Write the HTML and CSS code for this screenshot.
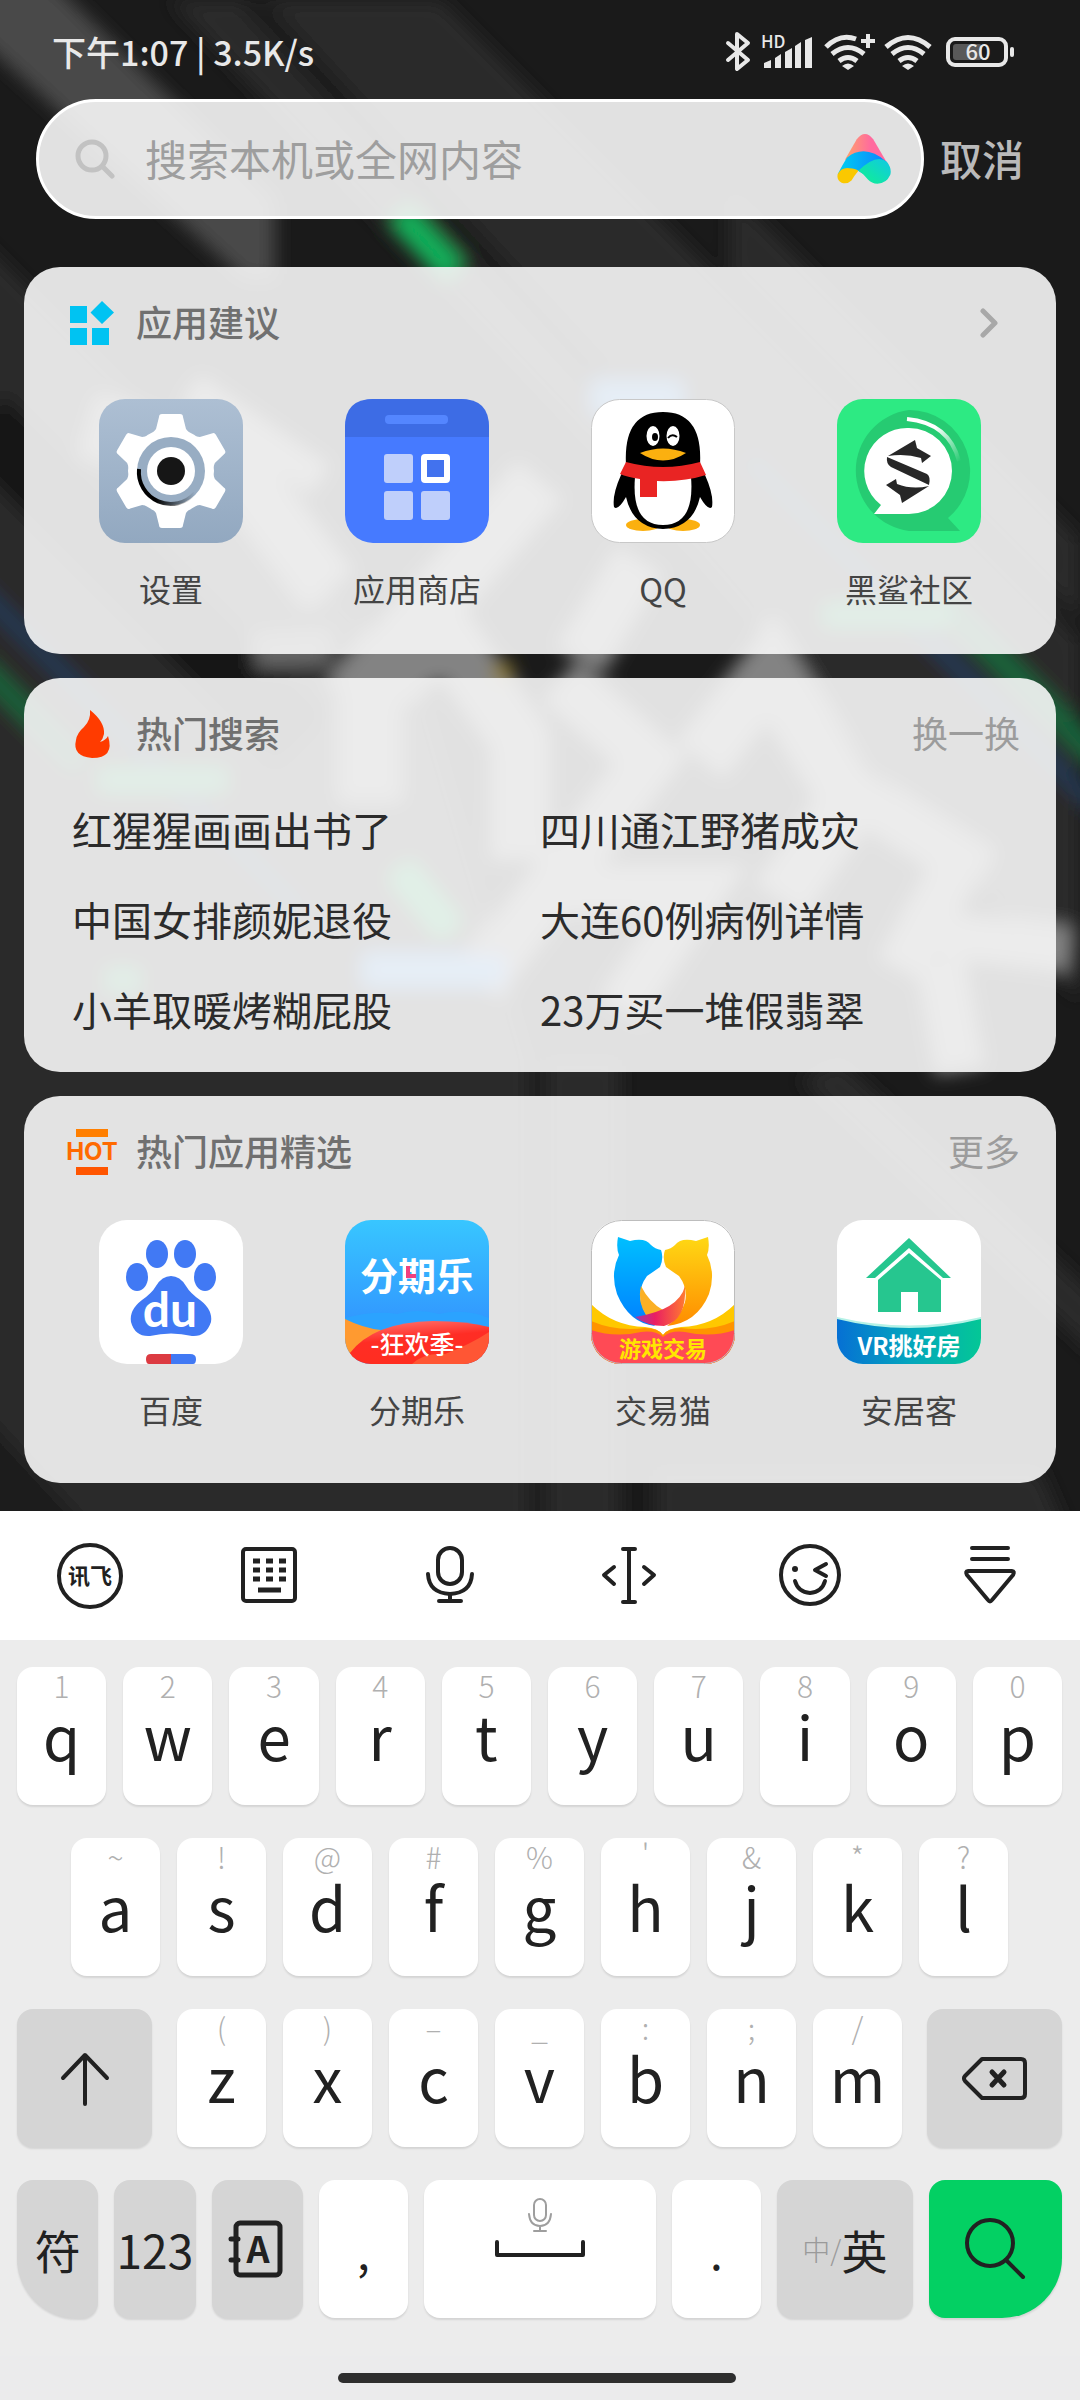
FILE: index.html
```html
<!DOCTYPE html>
<html lang="zh-CN">
  <head>
    <meta charset="UTF-8" />
    <meta name="viewport" content="width=device-width, initial-scale=1" />
    <title>搜索</title>
    <link rel="stylesheet" href="styles.css">
  </head>

  <body>
    <div class="launcher">
      <svg class="wallpaper" viewBox="0 0 1080 1511" preserveAspectRatio="xMidYMin slice" aria-hidden="true">
        <defs>
          <filter id="soft" x="-10%" y="-10%" width="120%" height="120%"><feGaussianBlur stdDeviation="9" /></filter>
        </defs>
        <rect width="1080" height="1511" fill="#1a1a1a" />
        <g filter="url(#soft)">
          <path d="M170 0H440L1080 640V1000L700 560Z" fill="#2a2a2a" />
          <path d="M-30 230L420 680L530 1060V1540H-30Z" fill="#2a2a2a" />
          <path d="M250 0L600 380" stroke="#1a1a1a" stroke-width="24" />
          <path d="M-20 420L300 740" stroke="#181818" stroke-width="70" />
          <path d="M730 190V270L1080 620V540Z" fill="#2b2b2b" />
          <path d="M-20 -20H50L275 200V280H245L-20 40Z" fill="#4a4a4a" />
          <path d="M545 1060H620V1540H545ZM655 1470H1040L1070 1540H655Z" fill="#2a2a2a" />
          <path d="M840 1060L1100 1300V1360L800 1080Z" fill="#292929" />
          <path d="M-20 1410L100 1540H-20Z" fill="#1d1d1d" />
          <g fill="none" stroke-width="14">
            <path d="M-20 590L90 700L300 910" stroke="#223b58" />
            <path d="M-20 665L80 765" stroke="#17643a" stroke-width="20" />
            <path d="M750 460L1100 810" stroke="#223b58" />
            <path d="M940 600L1100 760" stroke="#17643a" stroke-width="24" />
          </g>
          <g fill="none" stroke="#838383" stroke-width="60">
            <path d="M90 425L240 470L330 590" />
            <path d="M190 390L320 480" stroke-width="36" />
            <path d="M255 652L330 648" stroke-width="34" stroke="#666" />
            <path d="M350 700L540 480" />
            <path d="M370 800V690L450 640L520 740V860" />
            <path d="M580 660L640 560M560 680L650 760L480 980" stroke-width="54" />
            <path d="M700 760L770 670L850 800L780 900" />
            <path d="M850 790L960 860L900 970M940 960L960 1070" stroke-width="50" />
            <path d="M1070 950L900 930" stroke-width="46" />
            <path d="M540 890H700L620 1010" stroke-width="50" />
          </g>
          <path d="M400 214L454 272" stroke="#0fb25b" stroke-width="26" />
          <path d="M400 870L450 930" stroke="#0fb25b" stroke-width="26" />
          <path d="M595 398H680M365 970H505" stroke="#4a9cf0" stroke-width="28" />
          <path d="M825 615H950M100 780H225M108 980H138" stroke="#22a05c" stroke-width="20" />
          <path d="M494 674L512 670" stroke="#8d7a20" stroke-width="20" />
        </g>
      </svg>

      <header class="status-bar">
        <span>下午1:07 | 3.5K/s</span>
        <svg class="status-icons" viewBox="724 21 292 62" role="img" aria-label="蓝牙 信号 WiFi 电量60">
          <g fill="none" stroke="#e8e8e8" stroke-width="4" stroke-linecap="round" stroke-linejoin="round">
            <path d="M728 43L748 60L737 69V34L748 43L728 60" />
          </g>
          <text x="761" y="48" class="hd">HD</text>
          <path d="M764 68V63L771 60V68ZM775 68V58L781 54V68ZM785 68V52L792 48V68ZM795 68V46L801 42V68ZM805 68V40L812 37V68Z" fill="#e8e8e8" />
          <g fill="none" stroke="#e8e8e8" stroke-width="5">
            <path d="M826 47Q840 33 856 39M832 54Q848 41 864 54M839 61Q848 54 857 61" />
            <path d="M868 34V48M861 41H875" stroke-width="4" />
            <path d="M886 47Q908 28 930 47M892 54Q908 41 924 54M899 61Q908 54 917 61" />
          </g>
          <path d="M842 66Q848 61 854 66L848 70ZM902 66Q908 61 914 66L908 70Z" fill="#e8e8e8" />
          <rect x="953" y="44" width="29" height="16" rx="3" fill="#595959" />
          <rect x="948" y="39" width="58" height="26" rx="7" fill="none" stroke="#e8e8e8" stroke-width="4" />
          <rect x="1010" y="47" width="4" height="10" rx="2" fill="#e8e8e8" />
          <text x="978" y="60" class="battery">60</text>
        </svg>
      </header>

      <form class="search-row">
        <div class="search-box">
          <svg class="search-icon" viewBox="0 0 40 40" aria-hidden="true">
            <g fill="none" stroke="#c2c2c2" stroke-width="5" stroke-linecap="round">
              <circle cx="17" cy="17" r="14" />
              <path d="M28 28L37 37" />
            </g>
          </svg>
          <input type="text" aria-label="搜索" placeholder="搜索本机或全网内容" />
          <svg class="assistant" viewBox="410 372 164 152" aria-hidden="true">
            <defs>
              <linearGradient id="pink"><stop offset="0.1" stop-color="#ff9a72" /><stop offset="0.6" stop-color="#ff6a9e" /></linearGradient>
              <linearGradient id="sky"><stop offset="0" stop-color="#00d0f0" /><stop offset="0.9" stop-color="#0a84ff" /></linearGradient>
              <linearGradient id="mint" x1="0" y1="1" x2="1" y2="0"><stop offset="0.3" stop-color="#10e6a6" /><stop offset="1" stop-color="#10c8e6" /></linearGradient>
            </defs>
            <path d="M434 450L470 388Q495 356 520 388L566 466Z" fill="url(#pink)" />
            <path d="M412 494Q424 470 440 444Q495 400 560 456L570 480L500 500L474 484Z" fill="url(#sky)" />
            <path d="M412 494Q424 472 448 476Q466 477 475 484Q462 500 454 513Q440 526 424 520Q408 512 412 494Z" fill="#fac800" />
            <path d="M475 484Q530 430 562 457Q577 476 572 496Q560 523 533 523Q515 522 504 510Q490 492 475 484Z" fill="url(#mint)" />
          </svg>
        </div>
        <button class="cancel" type="button">取消</button>
      </form>

      <main class="cards">
        <section class="card">
          <div class="card-header">
            <svg class="card-icon" viewBox="0 0 56 56" aria-hidden="true">
              <path d="M6 11H23V28H6ZM6 33H23V50H6ZM28 33H45V50H28ZM38 6L50 17.500L38 29L26.500 17.500Z" fill="#00c3f2" />
            </svg>
            <h2>应用建议</h2>
            <button class="more arrow" type="button" aria-label="展开">
              <svg viewBox="0 0 18 30" width="18" height="30" aria-hidden="true">
                <path d="M3 3L15 15L3 27" fill="none" stroke="#a8a8a8" stroke-width="5" stroke-linecap="round" stroke-linejoin="round" />
              </svg>
            </button>
          </div>
          <div class="apps">
            <a class="app" href="#">
              <svg viewBox="0 0 144 144" aria-hidden="true">
                <defs>
                  <linearGradient id="steel" x2="0" y2="1"><stop offset="0" stop-color="#adbfd3" /><stop offset="1" stop-color="#92a8c0" /></linearGradient>
                  <linearGradient id="fade"><stop offset="0.3" stop-color="#000" /><stop offset="1" stop-color="#000" stop-opacity="0" /></linearGradient>
                  <path id="tooth" d="M-20 -36L-15 -42L-12 -54Q-12 -57 -9 -57H9Q12 -57 12 -54L15 -42L20 -36Z" />
                </defs>
                <rect width="144" height="144" rx="26" fill="url(#steel)" />
                <g transform="translate(72 72)" fill="#fff">
                  <circle r="43" />
                  <use href="#tooth" />
                  <use href="#tooth" transform="rotate(60)" />
                  <use href="#tooth" transform="rotate(120)" />
                  <use href="#tooth" transform="rotate(180)" />
                  <use href="#tooth" transform="rotate(240)" />
                  <use href="#tooth" transform="rotate(300)" />
                  <circle r="34" fill="#98adc3" />
                  <path d="M-32 -2A32 32 0 0 0 24 22" fill="none" stroke="url(#fade)" stroke-width="4" />
                  <circle r="24" />
                  <circle r="14" fill="#161616" />
                </g>
              </svg>
              <span>设置</span>
            </a>
            <a class="app" href="#">
              <svg viewBox="0 0 144 144" aria-hidden="true">
                <rect width="144" height="144" rx="28" fill="#467aff" />
                <path d="M0 38V28Q0 0 28 0H116Q144 0 144 28V38Z" fill="#3d6ce5" />
                <rect x="40" y="16" width="63" height="9" rx="4" fill="#5486ff" />
                <rect x="39" y="55" width="29" height="29" rx="3" fill="#bfcffb" />
                <rect x="39" y="92" width="29" height="29" rx="3" fill="#bfcffb" />
                <rect x="76" y="92" width="29" height="29" rx="3" fill="#bfcffb" />
                <rect x="79" y="58" width="23" height="23" rx="1" fill="#4272ee" stroke="#fff" stroke-width="6" />
              </svg>
              <span>应用商店</span>
            </a>
            <a class="app" href="#">
              <svg viewBox="0 0 144 144" aria-hidden="true">
                <rect x="0.500" y="0.500" width="143" height="143" rx="28" fill="#fff" stroke="#c8c8c8" />
                <ellipse cx="52" cy="126" rx="17" ry="6" fill="#fbb00f" />
                <ellipse cx="92" cy="126" rx="17" ry="6" fill="#fbb00f" />
                <path d="M35 66Q32 13 72 13Q112 13 109 66L114 76Q123 96 121 108Q117 112 109 98Q102 129 72 130Q42 129 35 98Q27 112 23 108Q21 96 30 76Z" />
                <path d="M44 78H100Q104 126 72 126Q40 126 44 78Z" fill="#fff" />
                <ellipse cx="62" cy="37" rx="6.500" ry="10" fill="#fff" />
                <ellipse cx="82" cy="37" rx="6.500" ry="10" fill="#fff" />
                <ellipse cx="64" cy="38" rx="3" ry="4" />
                <path d="M77 39Q81 34 86 38" fill="none" stroke="#000" stroke-width="2" />
                <path d="M49 54Q72 45 95 54Q72 69 49 54Z" fill="#fbb00f" />
                <path d="M35 63Q72 73 109 63L115 76Q93 83 66 82V98H49V80Q36 78 29 75Z" fill="#e92423" />
              </svg>
              <span>QQ</span>
            </a>
            <a class="app" href="#">
              <svg viewBox="0 0 144 144" aria-hidden="true">
                <defs>
                  <linearGradient id="shine" gradientUnits="userSpaceOnUse" x1="70" y1="20" x2="122" y2="64"><stop offset="0.4" stop-color="#fff" /><stop offset="1" stop-color="#fff" stop-opacity="0" /></linearGradient>
                </defs>
                <rect width="144" height="144" rx="26" fill="#2dea83" />
                <path d="M72 11A61 61 0 0 1 111 119L123 132H72A61 61 0 0 1 72 11Z" fill="#26cb72" />
                <path d="M70 20Q112 24 122 62" fill="none" stroke="url(#shine)" stroke-width="4" />
                <path d="M72 29A43 43 0 0 1 72 115H37L44 106A43 43 0 0 1 72 29Z" fill="#fff" />
                <path d="M51 57L78 41L80 49L94 57L85 64L84 59Q68 54 51 57ZM50 58L90 75Q94 78 92 86L54 68Q49 65 50 58ZM49 86L59 80L60 85Q75 91 92 87L65 104L63 96Z" fill="#272727" />
              </svg>
              <span>黑鲨社区</span>
            </a>
          </div>
        </section>

        <section class="card">
          <div class="card-header">
            <svg class="card-icon" viewBox="0 0 56 56" aria-hidden="true">
              <path d="M26 4Q41 16 40 28Q39 33 36 36Q42 34 44 30Q51 52 28 52Q8 50 12 34Q13 27 20 21Q27 14 26 4Z" fill="#ff3b00" />
            </svg>
            <h2>热门搜索</h2>
            <button class="more" type="button">换一换</button>
          </div>
          <div class="trends">
            <a href="#">红猩猩画画出书了</a>
            <a href="#">四川通江野猪成灾</a>
            <a href="#">中国女排颜妮退役</a>
            <a href="#">大连60例病例详情</a>
            <a href="#">小羊取暖烤糊屁股</a>
            <a href="#">23万买一堆假翡翠</a>
          </div>
        </section>

        <section class="card card-picks">
          <div class="card-header">
            <svg class="card-icon" viewBox="0 0 56 56" aria-hidden="true">
              <path d="M12 5H44V13H12Z" fill="#ff7f00" />
              <path d="M12 43H44V51H12Z" fill="#ff5500" />
              <text x="28" y="36" class="hot">HOT</text>
            </svg>
            <h2>热门应用精选</h2>
            <button class="more" type="button">更多</button>
          </div>
          <div class="apps">
            <a class="app" href="#">
              <svg viewBox="0 0 144 144" aria-hidden="true">
                <rect width="144" height="144" rx="28" fill="#fff" />
                <g fill="#4179f4">
                  <ellipse cx="58" cy="34" rx="11" ry="14" />
                  <ellipse cx="86" cy="34" rx="11" ry="14" />
                  <ellipse cx="38" cy="57" rx="11" ry="14" />
                  <ellipse cx="106" cy="57" rx="11" ry="14" />
                  <path d="M72 56Q81 56 87 66Q91 73 101 80Q114 90 112 102Q107 117 93 116Q72 111 51 116Q36 117 32 102Q30 90 43 80Q53 73 57 66Q63 56 72 56Z" />
                  <path d="M72 134H91Q97 134 97 139Q97 144 94 144H72Z" />
                </g>
                <path d="M72 134H52Q47 134 47 139Q47 144 50 144H72Z" fill="#dc3b42" />
                <text x="71" y="107" class="du">du</text>
              </svg>
              <span>百度</span>
            </a>
            <a class="app" href="#">
              <svg viewBox="0 0 144 144" aria-hidden="true">
                <defs>
                  <linearGradient id="day" x2="0" y2="1"><stop offset="0" stop-color="#38c6ff" /><stop offset="0.75" stop-color="#3195ff" /></linearGradient>
                  <linearGradient id="wave" x2="0.300" y2="1"><stop offset="0" stop-color="#ff7d78" /><stop offset="0.5" stop-color="#ff2d25" /><stop offset="1" stop-color="#ff2d20" /></linearGradient>
                  <clipPath id="tile"><rect width="144" height="144" rx="26" /></clipPath>
                </defs>
                <g clip-path="url(#tile)">
                  <rect width="144" height="144" fill="url(#day)" />
                  <path d="M0 98Q30 90 52 94Q72 88 94 94Q120 88 144 98V120H0Z" fill="#2ba3ff" />
                  <path d="M0 99Q18 108 36 110L4 144H0Z" fill="#ff9a30" />
                  <path d="M4 134Q28 102 88 101Q122 101 144 107V144H0Z" fill="url(#wave)" />
                  <path d="M67 144Q80 132 100 134Q126 124 144 112V144Z" fill="#ff5634" />
                </g>
                <text x="72" y="70" class="tile-title">分期乐</text>
                <path d="M63 46V56H71" fill="none" stroke="#f0417f" stroke-width="4" />
                <text x="72" y="134" class="tile-note">-狂欢季-</text>
              </svg>
              <span>分期乐</span>
            </a>
            <a class="app" href="#">
              <svg viewBox="0 0 144 144" aria-hidden="true">
                <defs>
                  <linearGradient id="cat-blue" x2="0" y2="1"><stop offset="0" stop-color="#00bfff" /><stop offset="1" stop-color="#0080ff" /></linearGradient>
                  <linearGradient id="cat-gold" x2="0" y2="1"><stop offset="0" stop-color="#ffd814" /><stop offset="1" stop-color="#ff8c00" /></linearGradient>
                  <linearGradient id="blend"><stop offset="0" stop-color="#9a3ab0" /><stop offset="0.4" stop-color="#ea1f62" /><stop offset="1" stop-color="#ff7a30" /></linearGradient>
                  <clipPath id="tile-round"><rect width="144" height="144" rx="30" /></clipPath>
                </defs>
                <g clip-path="url(#tile-round)">
                  <rect width="144" height="144" fill="#fff" />
                  <path d="M0 84Q22 106 54 107Q67 108 72 115Q77 108 90 107Q122 106 144 84V144H0Z" fill="#ffc800" />
                  <path d="M0 101Q26 112 54 108Q67 108 72 115Q77 108 90 108Q118 112 144 101V144H0Z" fill="#ff9400" />
                  <path d="M0 110Q24 118 50 112Q64 110 72 117Q80 110 94 112Q120 118 144 110V144H0Z" fill="#ff4a55" />
                </g>
                <path d="M27 17L39 21Q54 17 60 25Q64 29 70 30Q73 38 69 47Q62 52 56 56Q47 68 50 82Q54 96 64 106Q38 103 26 74Q19 53 28 35Q25 28 27 17Z" fill="url(#cat-blue)" />
                <path d="M117 17L105 21Q90 17 84 25Q80 29 74 30Q71 38 75 47Q82 52 88 56Q97 68 94 82Q90 96 76 106Q106 103 118 74Q125 53 116 35Q119 28 117 17Z" fill="url(#cat-gold)" />
                <path d="M50 66Q58 82 72 90L56 97Q46 82 50 66Z" fill="#fbb024" />
                <path d="M94 66Q88 90 44 97Q56 106 73 106Q96 100 94 66Z" fill="url(#blend)" />
                <rect x="0.500" y="0.500" width="143" height="143" rx="30" fill="none" stroke="#bdbdbd" />
                <text x="72" y="137" class="tile-tag">游戏交易</text>
              </svg>
              <span>交易猫</span>
            </a>
            <a class="app" href="#">
              <svg viewBox="0 0 144 144" aria-hidden="true">
                <defs>
                  <linearGradient id="sea"><stop offset="0" stop-color="#0670d4" /><stop offset="0.5" stop-color="#04a5bd" /><stop offset="1" stop-color="#04c796" /></linearGradient>
                </defs>
                <g clip-path="url(#tile)">
                  <rect width="144" height="144" fill="#fff" />
                  <path d="M0 97Q72 114 144 97V144H0Z" fill="#b5f2e6" />
                  <path d="M0 99Q72 117 144 99V144H0Z" fill="url(#sea)" />
                </g>
                <path d="M72 18L114 58H106L72 28L38 58H29ZM72 33L104 60V92H81V72H64V92H41V60Z" fill="#26c68f" />
                <text x="72" y="135" class="tile-tag vr">VR挑好房</text>
              </svg>
              <span>安居客</span>
            </a>
          </div>
        </section>
      </main>
    </div>

    <div class="keyboard">
      <div class="toolbar">
        <button type="button" aria-label="讯飞输入法">
          <svg viewBox="0 0 72 72" aria-hidden="true">
            <circle cx="36" cy="36" r="31" />
            <text x="36" y="44" class="brand">讯飞</text>
          </svg>
        </button>
        <button type="button" aria-label="键盘">
          <svg viewBox="0 0 72 72" aria-hidden="true">
            <rect x="9" y="9" width="52" height="52" rx="3" />
            <path d="M19 21H26M32 21H39M45 21H52M19 30H26M32 30H39M45 30H52M19 39H26M32 39H39M45 39H52M24 50H47" class="thick" />
          </svg>
        </button>
        <button type="button" aria-label="语音">
          <svg viewBox="0 0 72 72" aria-hidden="true">
            <rect x="24" y="8" width="24" height="36" rx="12" />
            <path d="M14 34Q15 53 36 54Q57 53 58 34M36 54V61M25 61H47" />
          </svg>
        </button>
        <button type="button" aria-label="移动光标">
          <svg viewBox="0 0 72 72" aria-hidden="true">
            <path d="M35 9V62M29 9H41M29 62H41M20 27L10 35L20 44M50 27L60 35L50 44" />
          </svg>
        </button>
        <button type="button" aria-label="表情">
          <svg viewBox="0 0 72 72" aria-hidden="true">
            <circle cx="36" cy="35" r="29" />
            <path d="M52 24L41 30L52 36M21 41Q24 52 36 53Q48 52 51 41" />
            <circle cx="21" cy="29" r="3" class="solid" />
          </svg>
        </button>
        <button type="button" aria-label="收起键盘">
          <svg viewBox="0 0 72 72" aria-hidden="true">
            <path d="M18 8H54M18 19H54M14 31H58Q61 31 59 35L38 60Q36 63 34 60L13 35Q11 31 14 31Z" />
          </svg>
        </button>
      </div>

      <div class="keys">
        <div class="key-row">
          <button class="key"><small>1</small>q</button>
          <button class="key"><small>2</small>w</button>
          <button class="key"><small>3</small>e</button>
          <button class="key"><small>4</small>r</button>
          <button class="key"><small>5</small>t</button>
          <button class="key"><small>6</small>y</button>
          <button class="key"><small>7</small>u</button>
          <button class="key"><small>8</small>i</button>
          <button class="key"><small>9</small>o</button>
          <button class="key"><small>0</small>p</button>
        </div>
        <div class="key-row key-row-home">
          <button class="key"><small>~</small>a</button>
          <button class="key"><small>!</small>s</button>
          <button class="key"><small>@</small>d</button>
          <button class="key"><small>#</small>f</button>
          <button class="key"><small>%</small>g</button>
          <button class="key"><small>'</small>h</button>
          <button class="key"><small>&amp;</small>j</button>
          <button class="key"><small>*</small>k</button>
          <button class="key"><small>?</small>l</button>
        </div>
        <div class="key-row">
          <button class="key key-dark shift" aria-label="Shift">
            <svg viewBox="0 0 72 72" aria-hidden="true"><path d="M36 62V14M14 36L36 13L58 36" /></svg>
          </button>
          <button class="key"><small>(</small>z</button>
          <button class="key"><small>)</small>x</button>
          <button class="key"><small>–</small>c</button>
          <button class="key"><small>_</small>v</button>
          <button class="key"><small>:</small>b</button>
          <button class="key"><small>;</small>n</button>
          <button class="key"><small>/</small>m</button>
          <button class="key key-dark backspace" aria-label="退格">
            <svg viewBox="0 0 72 72" aria-hidden="true"><path d="M23 17H62Q66 17 66 21V52Q66 56 62 56H23L6 39Q4 36 6 34Z" /><path d="M33 30L45 43M45 30L33 43" class="thick-round" /></svg>
          </button>
        </div>
        <div class="key-row key-row-bottom">
          <button class="key key-dark symbols">符</button>
          <button class="key key-dark digits">123</button>
          <button class="key key-dark book" aria-label="通讯录">
            <svg viewBox="0 0 72 72" aria-hidden="true">
              <rect x="15" y="10" width="44" height="52" rx="4" class="thick-round" />
              <path d="M10 26H17M10 47H17" class="thick-round" />
              <text x="37" y="50" class="book-letter">A</text>
            </svg>
          </button>
          <button class="key mark">,</button>
          <button class="key space" aria-label="空格">
            <svg viewBox="0 0 94 64" aria-hidden="true">
              <g class="space-mic"><rect x="41" y="2" width="12" height="22" rx="6" /><path d="M36 17Q37 29 47 29Q57 29 58 17M47 29V34M41 34H53" /></g>
              <path d="M4 45V58H90V45" />
            </svg>
          </button>
          <button class="key mark">.</button>
          <button class="key key-dark language"><span>中/</span>英</button>
          <button class="key go" aria-label="搜索">
            <svg viewBox="0 0 72 72" aria-hidden="true"><circle cx="31" cy="30" r="23" /><path d="M47 47L64 64" /></svg>
          </button>
        </div>
      </div>

      <div class="nav-bar"><span></span></div>
    </div>
  </body>
</html>
```
FILE: styles.css
```css
* {
  box-sizing: border-box;
}

body {
  margin: 0;
  min-height: 100vh;
  display: flex;
  flex-direction: column;
  font-family: "Noto Sans CJK SC", "Noto Sans", sans-serif;
  background: #1a1a1a;
}

button {
  border: none;
  padding: 0;
  background: none;
  font: inherit;
  color: inherit;
}

a {
  color: inherit;
  text-decoration: none;
}

.launcher {
  position: relative;
  flex: 1;
  padding-bottom: 28px;
}

.wallpaper {
  position: absolute;
  top: 0;
  left: 0;
  width: 100%;
  height: 100%;
  z-index: -1;
}

/* status bar */
.status-bar {
  display: flex;
  justify-content: space-between;
  align-items: center;
  height: 99px;
  padding: 4px 64px 0 52px;
  color: #e8e8e8;
  font-size: 34px;
  font-weight: 500;
}

.status-icons {
  width: 292px;
  height: 62px;
}

.status-icons text {
  fill: #e8e8e8;
  font-weight: 500;
}

.hd {
  font-size: 17px;
}

.status-icons .battery {
  font-size: 22px;
  text-anchor: middle;
}

/* search */
.search-row {
  display: flex;
  align-items: center;
  padding: 0 56px 0 36px;
  gap: 16px;
}

.search-box {
  flex: 1;
  display: flex;
  align-items: center;
  height: 120px;
  padding: 0 30px 0 36px;
  border: 3px solid #fff;
  border-radius: 60px;
  background: rgba(247, 247, 247, 0.9);
}

.search-icon {
  width: 40px;
  height: 40px;
}

.search-box input {
  flex: 1;
  min-width: 0;
  margin-left: 30px;
  padding: 0 0 4px;
  border: none;
  outline: none;
  background: none;
  font: inherit;
  font-size: 42px;
}

.search-box input::placeholder {
  color: #9e9e9e;
}

.assistant {
  width: 54px;
  height: 50px;
}

.cancel {
  padding-bottom: 4px;
  color: #bababa;
  font-size: 42px;
  font-weight: 500;
}

/* cards */
.cards {
  display: flex;
  flex-direction: column;
  gap: 24px;
  padding: 48px 24px 0;
}

.card {
  border-radius: 36px;
  background: rgba(247, 247, 247, 0.9);
}

.card-header {
  display: flex;
  align-items: center;
  height: 92px;
  padding: 20px 36px 0 40px;
}

.card-icon {
  width: 56px;
  height: 56px;
}

.card-header h2 {
  flex: 1;
  margin: 0 0 0 16px;
  padding-bottom: 4px;
  color: #707070;
  font-size: 36px;
  font-weight: 500;
}

.more {
  padding-bottom: 4px;
  color: #9c9c9c;
  font-size: 36px;
}

.arrow {
  display: flex;
  padding: 0 22px 0 0;
}

.apps {
  display: grid;
  grid-template-columns: repeat(4, 1fr);
  padding: 40px 24px 42px;
}

.card-picks .apps {
  padding: 32px 24px 50px;
}

.app {
  display: flex;
  flex-direction: column;
  align-items: center;
  gap: 21px;
  color: #444;
  font-size: 32px;
  line-height: 48px;
}

.app svg {
  width: 144px;
  height: 144px;
}

.trends {
  display: grid;
  grid-template-columns: 1fr 1fr;
  padding: 14px 48px 18px;
  color: #2b2b2b;
  font-size: 40px;
  line-height: 90px;
}

.hot,
.du,
.tile-title,
.tile-note,
.tile-tag,
.brand,
.book-letter {
  text-anchor: middle;
  font-weight: 700;
}

.hot {
  fill: #ff6a00;
  font-family: Inter, sans-serif;
  font-size: 24px;
}

.du {
  fill: #fff;
  font-family: Lato, sans-serif;
  font-size: 48px;
}

.tile-title {
  fill: #fff;
  font-size: 38px;
}

.tile-note {
  fill: #fff;
  font-size: 25px;
  font-weight: 500;
}

.tile-tag {
  fill: #ffe600;
  font-size: 22px;
}

.vr {
  fill: #fff;
  font-size: 24px;
}

/* keyboard */
.keyboard {
  background: #ececec;
  color: #212121;
}

.keyboard svg {
  width: 72px;
  height: 72px;
  fill: none;
  stroke: #212121;
  stroke-width: 4px;
  stroke-linecap: round;
  stroke-linejoin: round;
}

.keyboard svg text,
.keyboard .solid {
  fill: #212121;
  stroke: none;
}

.keyboard .thick {
  stroke-width: 5px;
  stroke-linecap: butt;
}

.keyboard .thick-round {
  stroke-width: 5px;
}

.toolbar {
  display: grid;
  grid-template-columns: repeat(6, 1fr);
  height: 129px;
  background: #fff;
}

.toolbar button {
  display: flex;
  align-items: center;
  justify-content: center;
}

.brand {
  font-size: 22px;
}

.keys {
  display: flex;
  flex-direction: column;
  gap: 33px;
  padding: 27px 18px 38px 17px;
}

.key-row {
  display: flex;
  gap: 17px;
}

.key-row-home {
  padding: 0 54px;
}

.key-row-bottom {
  gap: 16px;
}

.key {
  flex: 89 1 0;
  min-width: 0;
  display: flex;
  flex-direction: column;
  align-items: center;
  height: 138px;
  border-radius: 16px;
  background: #fff;
  box-shadow: 0 2px 2px rgba(0, 0, 0, 0.1);
  font-size: 60px;
  line-height: 64px;
}

.key small {
  color: #b0b0b0;
  font-size: 30px;
  font-weight: 300;
  line-height: 36px;
}

.key-dark,
.go {
  justify-content: center;
  background: #d5d5d5;
  font-size: 46px;
}

.shift {
  flex-grow: 135;
  margin-right: 8px;
}

.backspace {
  flex-grow: 135;
  margin-left: 8px;
}

.symbols {
  flex-grow: 81;
  border-bottom-left-radius: 60px;
}

.digits {
  flex-grow: 81;
}

.book {
  flex-grow: 91;
}

.book-letter {
  font-size: 36px;
}

.mark {
  padding-top: 38px;
  font-size: 46px;
}

.space {
  flex-grow: 231;
  padding-top: 17px;
}

.keyboard .space svg {
  width: 94px;
  height: 64px;
}

.space-mic {
  stroke: #9e9e9e;
  stroke-width: 2px;
}

.language {
  flex-grow: 135;
  flex-direction: row;
  align-items: center;
}

.language span {
  color: #9a9a9a;
  font-size: 28px;
  font-weight: 300;
}

.go {
  flex-grow: 133;
  border-bottom-right-radius: 60px;
  background: #03d063;
}

.nav-bar {
  display: flex;
  justify-content: center;
  align-items: center;
  height: 44px;
  padding-right: 6px;
  background: #ebebec;
}

.nav-bar span {
  width: 37%;
  height: 10px;
  border-radius: 5px;
  background: #2e2e2e;
}
```
